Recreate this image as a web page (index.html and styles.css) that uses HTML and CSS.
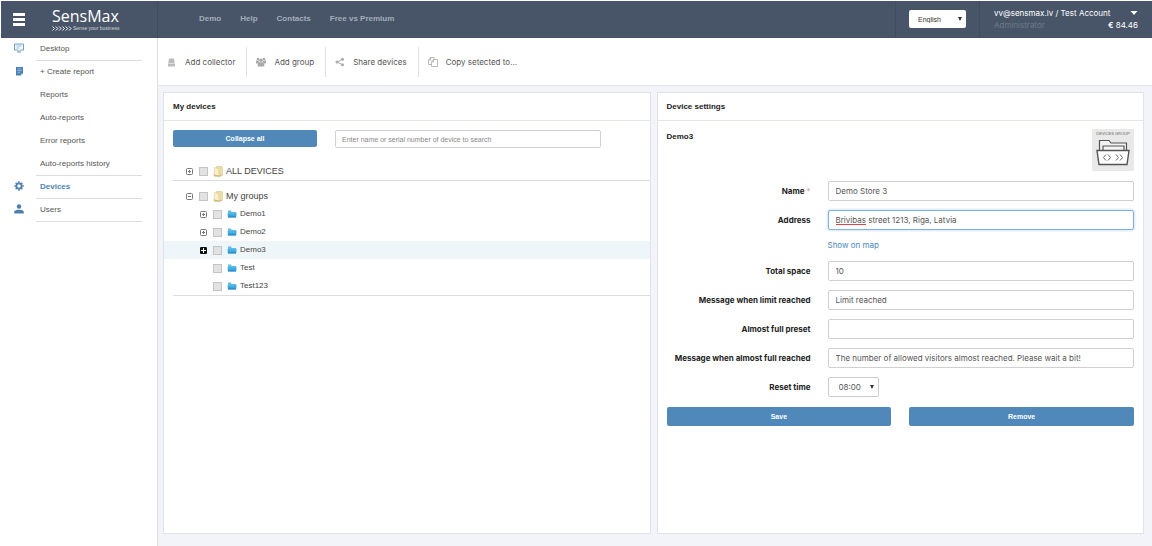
FILE: index.html
```html
<!DOCTYPE html>
<html lang="en">
<head>
<meta charset="utf-8">
<meta name="viewport" content="width=device-width, initial-scale=1">
<title>SensMax – Devices</title>
<link rel="stylesheet" href="styles.css">
</head>
<body>
<svg class="defs" aria-hidden="true">
  <symbol id="plus" viewBox="0 0 7 7"><rect x=".5" y=".5" width="6" height="6" rx="1" fill="none" stroke="currentColor"/><path d="M2 3.5h3M3.500 2v3" stroke="currentColor"/></symbol>
  <symbol id="minus" viewBox="0 0 7 7"><rect x=".5" y=".5" width="6" height="6" rx="1" fill="none" stroke="currentColor"/><path d="M2 3.500h3" stroke="currentColor"/></symbol>
  <symbol id="folders" viewBox="0 0 10 11"><path d="M3.500 .5h5.500l.7 1v7.500l-1 .8H4z" fill="#ecdda6" stroke="#d3bf85" stroke-width=".5"/><path d="M1.500 1.500l4 1 .8 8L1 9.500z" fill="#f8f0cb" stroke="#d3c08a" stroke-width=".5"/><path d="M.4 8.500l1 2h6l1.800-1.500-3 .5z" fill="#cdb878"/></symbol>
  <symbol id="folder" viewBox="0 0 10 8"><path d="M1 .5h3l.8 1.500H9v5H1z" fill="#5fbde6"/><path d="M.5 3h9.200L9 7.500H1z" fill="#48b2e2"/><path d="M.8 5.500h8.500L9 7.500H1z" fill="#2f93cb"/></symbol>
</svg>

<header class="topbar">
  <div class="brand">
    <button class="menu-button" type="button" aria-label="Menu"><span></span><span></span><span></span></button>
    <a class="logo" href="#">
      <span class="logo-name">SensMax</span>
      <span class="logo-tag"><svg viewBox="0 0 20 5" aria-hidden="true"><path d="M.5.500l2 2-2 2M3.800.500l2 2-2 2M7.100.500l2 2-2 2M10.400.500l2 2-2 2M13.700.500l2 2-2 2M17 .5l2 2-2 2" fill="none" stroke="#fff"/></svg>Sense your business</span>
    </a>
  </div>
  <nav class="top-nav">
    <a href="#">Demo</a><a href="#">Help</a><a href="#">Contacts</a><a href="#">Free vs Premium</a>
  </nav>
  <div class="language">
    <select aria-label="Language"><option>English</option></select>
  </div>
  <div class="account">
    <div class="account-line"><span>vv@sensmax.lv / Test Account</span><svg class="caret" viewBox="0 0 8 4" aria-hidden="true"><path d="M.5 0h7L4 4z" fill="#fff"/></svg></div>
    <div class="account-line"><span class="role">Administrator</span><span class="balance"><b>€</b> 84.46</span></div>
  </div>
</header>

<div class="layout">
  <nav class="sidebar">
    <section class="side-group">
      <svg class="side-icon" viewBox="0 0 10 10" aria-hidden="true"><path d="M.5 1h9v6H6.500L5 8.500 3.500 7h-3z" fill="#f3f8fc" stroke="#6f9fca"/><path d="M2.500 3h5M2.500 5h3" stroke="#86aed2" stroke-width=".8"/><path d="M3 9h4" stroke="#6f9fca"/></svg>
      <div class="side-links"><a href="#">Desktop</a></div>
    </section>
    <section class="side-group">
      <svg class="side-icon" viewBox="0 0 10 10" aria-hidden="true"><path d="M2 1h7v6.500L7 9.500H2z" fill="#4b82b5"/><path d="M3.500 3h4M3.500 4.700h4M3.500 6.400h2.500" stroke="#b5cfe4" stroke-width=".7"/><path d="M7 9.500V7.500h2z" fill="#c4d8e8"/></svg>
      <div class="side-links"><a href="#">+ Create report</a><a href="#">Reports</a><a href="#">Auto-reports</a><a href="#">Error reports</a><a href="#">Auto-reports history</a></div>
    </section>
    <section class="side-group">
      <svg class="side-icon" viewBox="0 0 10 10" aria-hidden="true"><circle cx="5" cy="5" r="2.700" fill="none" stroke="#4d7fae" stroke-width="1.800"/><path d="M5 .3v1.500M5 8.200v1.500M.3 5h1.500M8.200 5h1.500M1.700 1.700l1 1M7.300 7.300l1 1M8.300 1.700l-1 1M2.700 7.300l-1 1" stroke="#4d7fae" stroke-width="1.600"/></svg>
      <div class="side-links"><a class="current" href="#" aria-current="page">Devices</a></div>
    </section>
    <section class="side-group">
      <svg class="side-icon" viewBox="0 0 10 10" aria-hidden="true"><circle cx="5" cy="2.500" r="2.200" fill="#4d7fae"/><path d="M.2 9.500V8C.2 6.300 3 5.700 5 5.700s4.800.6 4.800 2.300v1.500z" fill="#4d7fae"/></svg>
      <div class="side-links"><a href="#">Users</a></div>
    </section>
  </nav>

  <main class="content">
    <div class="toolbar">
      <button type="button"><svg viewBox="0 0 10 10" aria-hidden="true"><path d="M2 1.500h5l.7 4.500H1.300zM1 6.500h7v3H1z" fill="#bbb"/></svg>Add collector</button>
      <button type="button"><svg viewBox="0 0 10 10" aria-hidden="true"><g fill="#aaa"><circle cx="2" cy="2" r="1.300"/><circle cx="8" cy="2" r="1.300"/><circle cx="5" cy="3.300" r="1.800"/><path d="M0 3.500h2.700L3.500 5.500 2 6.500H0zM10 3.500H7.300L6.500 5.500 8 6.500h2zM1.700 9.500V7.500Q1.800 5.500 3.500 5.300h3Q8.200 5.500 8.300 7.500v2z"/></g></svg>Add group</button>
      <button type="button"><svg viewBox="0 0 10 10" aria-hidden="true"><path d="M7.500 2.200L2 5l5.500 2.800" fill="none" stroke="#aaa"/><g fill="#aaa"><circle cx="7.500" cy="2.200" r="1.500"/><circle cx="2" cy="5" r="1.500"/><circle cx="7.500" cy="7.800" r="1.500"/></g></svg>Share devices</button>
      <button type="button"><svg viewBox="0 0 10 10" aria-hidden="true"><path d="M3.500 7.500H.5V3l2-2.500h3.500V2.500M.5 3h2V.500M3.500 9.500V5l2-2.500h4v7zM3.500 5h2V2.500" fill="none" stroke="#aaa" stroke-width=".8"/></svg>Copy setected to...</button>
    </div>

    <div class="panels">
      <section class="panel">
        <h2>My devices</h2>
        <div class="search-row">
          <button class="primary collapse" type="button">Collapse all</button>
          <input class="search" type="text" aria-label="Search devices" placeholder="Enter name or serial number of device to search">
        </div>
        <ul class="tree">
          <li class="root">
            <div class="node"><button class="toggle" type="button" aria-label="Expand"><svg><use href="#plus"/></svg></button><label><input type="checkbox"><svg class="folders"><use href="#folders"/></svg>ALL DEVICES</label></div>
          </li>
          <li class="root">
            <div class="node"><button class="toggle" type="button" aria-label="Collapse"><svg><use href="#minus"/></svg></button><label><input type="checkbox"><svg class="folders"><use href="#folders"/></svg>My groups</label></div>
            <ul>
              <li class="node child"><button class="toggle" type="button" aria-label="Expand"><svg><use href="#plus"/></svg></button><label><input type="checkbox"><svg class="folder"><use href="#folder"/></svg>Demo1</label></li>
              <li class="node child"><button class="toggle" type="button" aria-label="Expand"><svg><use href="#plus"/></svg></button><label><input type="checkbox"><svg class="folder"><use href="#folder"/></svg>Demo2</label></li>
              <li class="node child selected"><button class="toggle solid" type="button" aria-label="Expand"><svg viewBox="0 0 7 7"><path d="M1 3.500h5M3.500 1v5" stroke="#fff"/></svg></button><label><input type="checkbox"><svg class="folder"><use href="#folder"/></svg>Demo3</label></li>
              <li class="node child"><span class="toggle"></span><label><input type="checkbox"><svg class="folder"><use href="#folder"/></svg>Test</label></li>
              <li class="node child"><span class="toggle"></span><label><input type="checkbox"><svg class="folder"><use href="#folder"/></svg>Test123</label></li>
            </ul>
          </li>
        </ul>
      </section>

      <section class="panel">
        <h2>Device settings</h2>
        <form class="settings">
          <div class="settings-head">
            <h3>Demo3</h3>
            <div class="group-badge">
              <span>DEVICES GROUP</span>
              <svg viewBox="0 0 34 27" aria-hidden="true"><path d="M3.500 11V1.500H13l2 2.500h15.500v7M7 11V7h21v4" fill="#f4f4f4" stroke="#555" stroke-width="1.200"/><path d="M1 11.500h32l-2 14H3z" fill="#fff" stroke="#555" stroke-width="1.400"/><path d="M10 15.500l-2.500 3 2.500 3M12 15.500l2.500 3-2.500 3M20 15.500l2.500 3-2.500 3M24 15.500l2.500 3-2.500 3" fill="none" stroke="#666"/></svg>
            </div>
          </div>
          <div class="fields">
            <label for="name">Name<span class="required">*</span></label>
            <input id="name" type="text" value="Demo Store 3">
            <label for="address">Address</label>
            <div class="misspelled"><input id="address" class="active" type="text" value="Brivibas street 1213, Riga, Latvia"></div>
            <a class="map-link" href="#">Show on map</a>
            <label for="space">Total space</label>
            <input id="space" type="text" value="10">
            <label for="limit">Message when limit reached</label>
            <input id="limit" type="text" value="Limit reached">
            <label for="preset">Almost full preset</label>
            <input id="preset" type="text">
            <label for="almost">Message when almost full reached</label>
            <input id="almost" type="text" value="The number of allowed visitors almost reached. Please wait a bit!">
            <label for="reset">Reset time</label>
            <select id="reset"><option>08:00</option></select>
          </div>
          <div class="actions">
            <button class="primary" type="button">Save</button>
            <button class="primary" type="button">Remove</button>
          </div>
        </form>
      </section>
    </div>
  </main>
</div>
</body>
</html>
```
FILE: styles.css
```css
* { box-sizing: border-box; }
body {
  display: flex;
  flex-direction: column;
  min-height: 100vh;
  margin: 0;
  padding: 1px 0 0 1px;
  background: #fff;
  color: #555;
  font: 8px/12px Inter, "Liberation Sans", Arial, sans-serif;
}
button, input, select { margin: 0; font: inherit; color: inherit; }
button { padding: 0; border: 0; background: none; cursor: pointer; }
a { color: inherit; text-decoration: none; }
ul { margin: 0; padding: 0; list-style: none; }
h2, h3 { margin: 0; color: #222; font: bold 8px/12px "Liberation Sans", Arial, sans-serif; }
svg { display: block; flex: none; }
.defs { display: none; }

/* Top bar */
.topbar { display: flex; height: 37px; background: #485568; border-bottom: 1px solid #445164; }
.brand { display: flex; align-items: center; flex: none; width: 157px; padding-left: 12px; border-right: 1px solid #414d5f; }
.menu-button { display: grid; gap: 2px; width: 12px; }
.menu-button span { height: 3px; background: #fff; }
.logo { display: flex; flex-direction: column; margin-left: 27px; color: #fff; }
.logo-name { font: 16px/18px "Open Sans", "Noto Sans", sans-serif; }
.logo-tag { display: flex; align-items: center; gap: 1px; font: 5px/6px "Liberation Sans", Arial, sans-serif; white-space: nowrap; color: #d0d6de; }
.logo-tag svg { width: 20px; height: 5px; }
.top-nav { display: flex; align-items: center; flex: 1; gap: 19px; padding-left: 41px; color: #a3adba; font: bold 8px/12px "Liberation Sans", Arial, sans-serif; }
.language { display: flex; align-items: center; padding: 0 13px; border: solid #414d5f; border-width: 0 1px; }
select {
  appearance: none;
  border: 1px solid #ccc;
  border-radius: 2px;
  background: #fff url("data:image/svg+xml,%3Csvg xmlns='http://www.w3.org/2000/svg' width='4' height='4'%3E%3Cpath d='M0 0h4L2 4z' fill='%23333'/%3E%3C/svg%3E") no-repeat right 4px center;
}
.language select { width: 57px; height: 18px; padding: 0 9px; border: 0; color: #333; font: 7px "Liberation Sans", Arial, sans-serif; }
.account { display: flex; flex-direction: column; justify-content: center; width: 172px; padding: 0 14px; color: #fff; }
.account-line { display: flex; align-items: center; justify-content: space-between; }
.caret { width: 8px; height: 4px; }
.role { color: #6d798a; }

/* Sidebar */
.layout { display: flex; flex: 1; }
.sidebar { flex: none; width: 157px; border-right: 1px solid #dcdee4; font: 8px/22px "Liberation Sans", Arial, sans-serif; }
.side-group { display: flex; gap: 12px; padding-left: 13px; }
.side-icon { width: 10px; height: 10px; margin-top: 5px; }
.side-links { display: grid; gap: 1px; width: 106px; padding-left: 4px; border-bottom: 1px solid #dedede; }
.current { color: #4d84b8; font-weight: bold; }

/* Toolbar */
.content { display: flex; flex-direction: column; flex: 1; min-width: 0; background: #f2f4fa; }
.toolbar { display: flex; align-items: center; height: 48px; background: #fff; border-bottom: 1px solid #e1e5ed; }
.toolbar button { display: flex; align-items: center; gap: 8px; height: 30px; padding: 0 11px 0 9px; border-right: 1px solid #e2e2e2; }
.toolbar button:last-child { border: 0; }
.toolbar svg { width: 10px; height: 10px; }

/* Panels */
.panels { display: grid; grid-template-columns: 1fr 1fr; flex: 1; gap: 6px; padding: 6px 8px 12px 5px; }
.panel { background: #fff; border: 1px solid #e0e3ea; }
.panel h2 { padding: 8px 9px 7px; border-bottom: 1px solid #e3e5ea; }
.search-row { display: flex; align-items: flex-start; gap: 18px; padding: 9px 49px 0 9px; }
.primary { height: 19px; border-radius: 2px; background: #5089b9; color: #fff; font: bold 7px/12px "Liberation Sans", Arial, sans-serif; }
.collapse { flex: none; width: 144px; height: 17px; }
.search { flex: 1; min-width: 0; height: 18px; padding: 0 6px; border: 1px solid #d0d0d0; border-radius: 2px; font: 7px "Liberation Sans", Arial, sans-serif; }
.search::placeholder { color: #888; }

/* Device tree */
.tree { padding-top: 14px; font: 9px/18px "Liberation Sans", Arial, sans-serif; color: #444; }
.root + .root { padding-top: 6px; }
.root::after { content: ""; display: block; height: 1px; margin-left: 9px; background: #ddd; }
.node { display: flex; align-items: center; gap: 6px; height: 18px; padding-left: 22px; }
.node label { display: flex; align-items: center; }
.toggle { width: 7px; height: 7px; color: #777; }
.toggle svg { width: 7px; height: 7px; }
.solid { border-radius: 1px; background: #111; }
.node input { appearance: none; width: 9px; height: 9px; margin-right: 5px; border: 1px solid #c4c4c4; background: #e2e2e2; }
.folders { width: 10px; height: 11px; margin-right: 3px; }
.folder { width: 10px; height: 8px; margin-right: 3px; }
.child { padding-left: 36px; font-size: 8px; }
.selected { background: #eef6fa; }

/* Settings form */
.settings { padding: 8px 9px; }
.settings-head { display: flex; justify-content: space-between; margin-bottom: 10px; }
.settings-head h3 { padding-top: 2px; }
.group-badge { display: flex; flex-direction: column; align-items: center; width: 42px; height: 42px; padding-top: 2px; background: #e9e9e9; color: #666; font: 4px/5px "Liberation Sans", Arial, sans-serif; white-space: nowrap; }
.group-badge svg { width: 34px; height: 27px; margin-top: 3px; }
.fields { display: grid; grid-template-columns: 144px 1fr; align-items: center; gap: 9px 17px; }
.fields label { color: #222; font-weight: 700; text-align: right; white-space: nowrap; }
.required { margin-left: 2px; color: #d99; font-weight: 400; }
.fields input { display: block; width: 100%; height: 20px; padding: 0 7px; border: 1px solid #d0d0d0; border-radius: 2px; background: #fff; }
.fields .active { border-color: #7fb2dc; box-shadow: 0 0 3px #a9cdea; }
.misspelled { position: relative; }
.misspelled::after { content: ""; position: absolute; left: 8px; bottom: 5px; width: 30px; height: 1px; background: #d44; }
.map-link { grid-column: 2; height: 13px; color: #4a86bd; line-height: 13px; }
.fields select { width: 51px; height: 20px; padding: 0 10px; }
.actions { display: grid; grid-template-columns: 1fr 1fr; gap: 18px; margin-top: 10px; }
```
